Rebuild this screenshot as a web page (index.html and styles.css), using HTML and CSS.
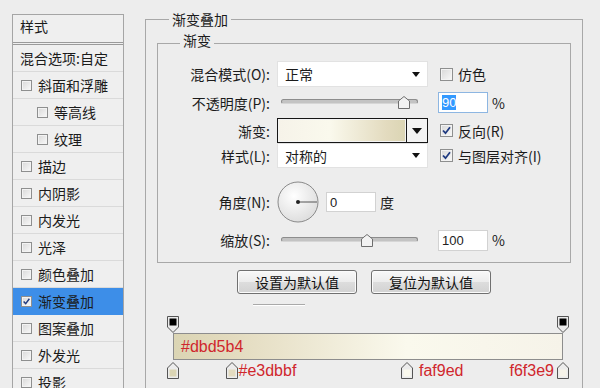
FILE: index.html
```html
<!DOCTYPE html>
<html lang="zh-CN">
<head>
    <meta charset="UTF-8">
    <meta name="viewport" content="width=device-width, initial-scale=1.0">
    <title>图层样式 - 渐变叠加</title>
    <link rel="stylesheet" href="styles.css">
</head>
<body>
<div class="window">
    <div class="style-list">
        <div class="list-head">样式</div>
        <div class="list-item plain">混合选项:自定</div>
        <div class="list-item"><span class="cb"></span>斜面和浮雕</div>
        <div class="list-item sub"><span class="cb"></span>等高线</div>
        <div class="list-item sub"><span class="cb"></span>纹理</div>
        <div class="list-item"><span class="cb"></span>描边</div>
        <div class="list-item"><span class="cb"></span>内阴影</div>
        <div class="list-item"><span class="cb"></span>内发光</div>
        <div class="list-item"><span class="cb"></span>光泽</div>
        <div class="list-item"><span class="cb"></span>颜色叠加</div>
        <div class="list-item active"><span class="cb"><svg viewBox="0 0 11 11"><path d="M2 5.5 L4.5 8.2 L9 2.2"/></svg></span>渐变叠加</div>
        <div class="list-item"><span class="cb"></span>图案叠加</div>
        <div class="list-item"><span class="cb"></span>外发光</div>
        <div class="list-item"><span class="cb"></span>投影</div>
    </div>

    <fieldset class="group outer">
        <legend>渐变叠加</legend>
        <fieldset class="group inner">
            <legend>渐变</legend>

            <div class="row r-mode">
                <span class="lbl">混合模式(O):</span>
                <div class="select"><span>正常</span><span class="arrow"></span></div>
                <label class="side"><span class="cb lg"></span>仿色</label>
            </div>

            <div class="row r-opacity">
                <span class="lbl">不透明度(P):</span>
                <div class="slider">
                    <div class="track">
                        <svg class="thumb" style="left: 90%" viewBox="0 0 12 13"><path d="M6 0.5 L11.5 5 V12.5 H0.5 V5 Z"/></svg>
                    </div>
                </div>
                <div class="field focus"><span class="sel-text">90</span></div>
                <span class="unit">%</span>
            </div>

            <div class="row r-grad">
                <span class="lbl">渐变:</span>
                <div class="swatch">
                    <div class="swatch-fill"></div>
                    <div class="swatch-btn"><span class="arrow big"></span></div>
                </div>
                <label class="side"><span class="cb lg"><svg viewBox="0 0 11 11"><path d="M2 5.5 L4.5 8.2 L9 2.2"/></svg></span>反向(R)</label>
            </div>

            <div class="row r-style">
                <span class="lbl">样式(L):</span>
                <div class="select"><span>对称的</span><span class="arrow"></span></div>
                <label class="side"><span class="cb lg"><svg viewBox="0 0 11 11"><path d="M2 5.5 L4.5 8.2 L9 2.2"/></svg></span>与图层对齐(I)</label>
            </div>

            <div class="row r-angle">
                <span class="lbl">角度(N):</span>
                <svg class="dial" viewBox="0 0 42 42">
                    <defs>
                        <radialGradient id="dialFill" cx="40%" cy="35%" r="70%">
                            <stop offset="0" stop-color="#ffffff"/>
                            <stop offset="1" stop-color="#dcdcdc"/>
                        </radialGradient>
                    </defs>
                    <circle cx="21" cy="21" r="20" fill="url(#dialFill)" stroke="#8a8a8a"/>
                    <line x1="21" y1="21" x2="40" y2="21" stroke="#555" stroke-width="1"/>
                    <circle cx="21" cy="21" r="2" fill="#222"/>
                </svg>
                <div class="field angle">0</div>
                <span class="unit">度</span>
            </div>

            <div class="row r-scale">
                <span class="lbl">缩放(S):</span>
                <div class="slider">
                    <div class="track">
                        <svg class="thumb" style="left: 63%" viewBox="0 0 12 13"><path d="M6 0.5 L11.5 5 V12.5 H0.5 V5 Z"/></svg>
                    </div>
                </div>
                <div class="field">100</div>
                <span class="unit">%</span>
            </div>
        </fieldset>

        <div class="buttons">
            <button class="btn">设置为默认值</button>
            <button class="btn">复位为默认值</button>
        </div>

        <div class="mini"></div>

        <div class="editor">
            <div class="stops-top">
                <svg class="stop" style="left: 0%" viewBox="0 0 12 17"><path class="stop-frame" d="M0.5 0.5 H11.5 V11 L6 16.5 L0.5 11 Z"/><rect x="2.5" y="2.5" width="7" height="7" fill="#000"/></svg>
                <svg class="stop" style="left: 100%" viewBox="0 0 12 17"><path class="stop-frame" d="M0.5 0.5 H11.5 V11 L6 16.5 L0.5 11 Z"/><rect x="2.5" y="2.5" width="7" height="7" fill="#000"/></svg>
            </div>
            <div class="bar">#dbd5b4</div>
            <div class="stops-bottom">
                <div class="stop-b" style="left: 0%">
                    <svg viewBox="0 0 12 17"><path class="stop-frame" d="M6 0.5 L11.5 6 V16.5 H0.5 V6 Z"/><rect x="2.5" y="7.5" width="7" height="7" fill="#dbd5b4"/></svg>
                </div>
                <div class="stop-b" style="left: 15%">
                    <svg viewBox="0 0 12 17"><path class="stop-frame" d="M6 0.5 L11.5 6 V16.5 H0.5 V6 Z"/><rect x="2.5" y="7.5" width="7" height="7" fill="#e3dbbf"/></svg>
                    <span class="stop-label">#e3dbbf</span>
                </div>
                <div class="stop-b" style="left: 60%">
                    <svg viewBox="0 0 12 17"><path class="stop-frame" d="M6 0.5 L11.5 6 V16.5 H0.5 V6 Z"/><rect x="2.5" y="7.5" width="7" height="7" fill="#faf9ed"/></svg>
                    <span class="stop-label far">faf9ed</span>
                </div>
                <div class="stop-b" style="left: 100%">
                    <svg viewBox="0 0 12 17"><path class="stop-frame" d="M6 0.5 L11.5 6 V16.5 H0.5 V6 Z"/><rect x="2.5" y="7.5" width="7" height="7" fill="#f6f3e9"/></svg>
                    <span class="stop-label before">f6f3e9</span>
                </div>
            </div>
        </div>
    </fieldset>
</div>
</body>
</html>
```

FILE: styles.css
```css
* {
    box-sizing: border-box;
}
body {
    margin: 0;
    height: 388px;
    overflow: hidden;
    background-color: #ededed;
    font-family: "Noto Sans CJK SC", sans-serif;
    font-size: 14px;
    color: #1b1b1b;
}
.window {
    display: flex;
    align-items: flex-start;
    padding-left: 12px;
}

/* left style list */
.style-list {
    width: 112px;
    flex-shrink: 0;
    margin-top: 14px;
    border: 1px solid #a5a5a5;
    background-color: #efefef;
}
.list-head {
    height: 30px;
    line-height: 22px;
    padding-left: 7px;
    border-bottom: 3px double #9a9a9a;
}
.list-item {
    height: 27px;
    display: flex;
    align-items: center;
    gap: 6px;
    padding-left: 8px;
    border-bottom: 1px solid #dadada;
    white-space: nowrap;
}
.list-item.plain {
    padding-left: 7px;
}
.list-item.sub {
    padding-left: 24px;
}
.list-item.active {
    background-color: #3d8ee8;
    border-bottom-color: #3d8ee8;
}

/* checkboxes */
.cb {
    width: 11px;
    height: 11px;
    flex-shrink: 0;
    border: 1px solid #8e8f8f;
    background: linear-gradient(135deg, #d8d8d8, #f9f9f9);
    box-shadow: inset 0 0 0 1px #f3f3f3;
    display: flex;
}
.cb.lg {
    width: 13px;
    height: 13px;
}
.cb svg {
    width: 100%;
    height: 100%;
}
.cb path {
    fill: none;
    stroke: #1f3a80;
    stroke-width: 1.8;
}

/* group boxes */
.group {
    margin: 0;
    padding: 0;
    min-width: 0;
    border: 1px solid #a8a8a8;
}
.group legend {
    padding: 0 3px;
    line-height: 20px;
}
.outer {
    width: 438px;
    height: 420px;
    margin: 9px 0 0 21px;
    padding: 1px 11px 0;
}
.outer legend {
    margin-left: 12px;
}
.inner {
    padding: 5px 0 6px;
}
.inner legend {
    margin-left: 22px;
    padding-bottom: 6px;
}

/* form rows */
.row {
    display: flex;
    align-items: center;
}
.lbl {
    width: 112px;
    flex-shrink: 0;
    margin-right: 7px;
    text-align: right;
    white-space: nowrap;
}
.r-mode { height: 26px; }
.r-opacity { height: 31px; }
.r-grad { height: 25px; }
.r-style { height: 25px; }
.r-angle { height: 44px; margin-top: 12px; }
.r-scale { height: 32px; }

.select {
    width: 151px;
    height: 100%;
    background-color: #fff;
    border: 1px solid #e2e2e2;
    display: flex;
    align-items: center;
    justify-content: space-between;
    padding: 0 7px;
}
.arrow {
    border-left: 4px solid transparent;
    border-right: 4px solid transparent;
    border-top: 5px solid #111;
}
.arrow.big {
    border-left-width: 5px;
    border-right-width: 5px;
    border-top-width: 6px;
}
.side {
    display: flex;
    align-items: center;
    gap: 5px;
    margin-left: 12px;
    white-space: nowrap;
}

.slider {
    width: 151px;
    padding: 0 10px 0 4px;
}
.track {
    position: relative;
    height: 5px;
    margin-top: -2px;
    border-radius: 3px;
    background-color: #c3c3c3;
    border: 1px solid #8d8d8d;
    border-bottom-color: #d6d6d6;
}
.thumb {
    position: absolute;
    top: -4px;
    width: 12px;
    height: 13px;
    margin-left: -6px;
}
.thumb path {
    fill: #f2f2f2;
    stroke: #6e6e6e;
}

.field {
    width: 50px;
    height: 21px;
    margin-left: 10px;
    padding-left: 3px;
    display: flex;
    align-items: center;
    background-color: #fff;
    border: 1px solid #d2d2d2;
    font-family: "Liberation Sans", Arial, sans-serif;
    font-size: 13px;
    color: #222;
}
.field.focus {
    border-color: #8db6e2;
}
.field.angle {
    margin-left: 7px;
    height: 20px;
}
.sel-text {
    background-color: #3399ff;
    color: #fff;
    line-height: 15px;
}
.unit {
    margin-left: 4px;
}

.swatch {
    width: 151px;
    height: 25px;
    display: flex;
    border: 1px solid #161616;
}
.swatch-fill {
    flex: 1;
    border: 1px solid #f4f4f4;
    background: linear-gradient(to right, #f6f3e9, #faf9ed 40%, #e3dbbf 85%, #dbd5b4);
}
.swatch-btn {
    width: 21px;
    border-left: 1px solid #161616;
    background-color: #f3f3f3;
    display: flex;
    align-items: center;
    justify-content: center;
}

.dial {
    width: 42px;
    height: 42px;
}

/* buttons */
.buttons {
    display: flex;
    justify-content: center;
    gap: 14px;
    margin-top: 7px;
}
.btn {
    width: 120px;
    height: 24px;
    padding: 0;
    font: inherit;
    color: #111;
    border: 1px solid #707070;
    border-radius: 3px;
    background: linear-gradient(#f8f8f8, #ececec 50%, #dddddd 51%, #d2d2d2);
    box-shadow: inset 0 0 0 1px #fbfbfb;
}

.mini {
    width: 52px;
    height: 1px;
    margin: 10px 0 0 96px;
    background-color: #a9a9a9;
    box-shadow: 0 1px 0 #fff;
}

/* gradient editor */
.editor {
    width: 390px;
    margin-left: 16px;
}
.stops-top {
    position: relative;
    height: 26px;
    margin-top: 2px;
}
.stop {
    position: absolute;
    bottom: 0;
    width: 12px;
    height: 17px;
    margin-left: -6px;
}
.stop-frame {
    fill: #ececec;
    stroke: #555;
}
.bar {
    height: 27px;
    padding-left: 7px;
    border: 1px solid #8d8d8d;
    background: linear-gradient(to right, #dbd5b4, #e3dbbf 15%, #faf9ed 60%, #f6f3e9);
    font-family: "Liberation Sans", Arial, sans-serif;
    font-size: 16px;
    line-height: 25px;
    color: #d0262c;
}
.stops-bottom {
    position: relative;
    height: 24px;
}
.stop-b {
    position: absolute;
    top: 2px;
    width: 12px;
    height: 17px;
    margin-left: -6px;
}
.stop-b svg {
    display: block;
    width: 12px;
    height: 17px;
}
.stop-label {
    position: absolute;
    top: 0;
    left: 13px;
    line-height: 17px;
    white-space: nowrap;
    font-family: "Liberation Sans", Arial, sans-serif;
    font-size: 16px;
    color: #d0262c;
}
.stop-label.far {
    left: 18px;
}
.stop-label.before {
    left: auto;
    right: 15px;
}
```
